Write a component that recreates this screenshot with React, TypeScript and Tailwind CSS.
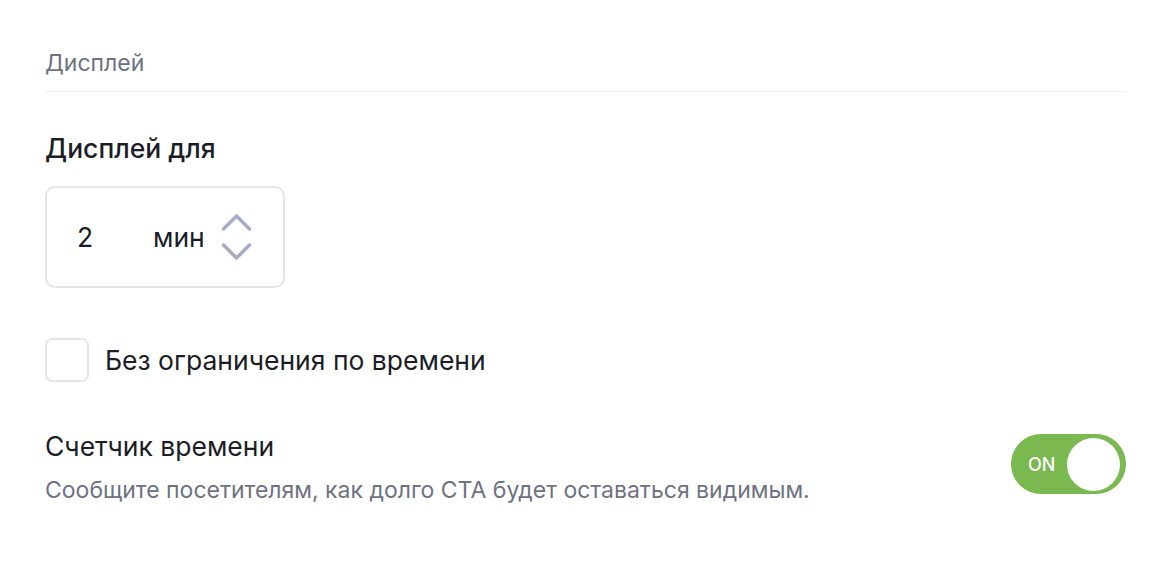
import { useState } from "react";

function Chevrons() {
  return (
    <svg width="32" height="48" viewBox="0 0 32 48" fill="none" aria-hidden>
      <path
        d="M3.5 16 L16.5 3 L29.5 16"
        stroke="#a6aac4"
        strokeWidth="3.5"
        strokeLinecap="round"
        strokeLinejoin="round"
      />
      <path
        d="M3.5 32 L16.5 45 L29.5 32"
        stroke="#a6aac4"
        strokeWidth="3.5"
        strokeLinecap="round"
        strokeLinejoin="round"
      />
    </svg>
  );
}

export default function App() {
  const [unlimited, setUnlimited] = useState(false);
  const [timerOn, setTimerOn] = useState(true);

  return (
    <div className="min-h-[564px] bg-white pl-[45px] pr-[36px] pt-[49px] font-['Inter',sans-serif] text-[#1c1d26]">
      <div className="border-b border-[#eef0f5] pb-[14px]">
        <p className="text-[23px] leading-[28px] text-[#6e7282]">Дисплей</p>
      </div>

      <h2 className="mt-[40px] text-[26.5px] leading-[32px] font-medium">Дисплей для</h2>

      <div className="mt-[22px] flex h-[102px] w-[240px] items-center rounded-[10px] border-2 border-[#e3e4ef] pl-[30px]">
        <span className="w-[76px] text-[26.5px] leading-[32px]">2</span>
        <span className="text-[26.5px] leading-[32px]">мин</span>
        <button type="button" className="ml-[15px] flex items-center">
          <Chevrons />
        </button>
      </div>

      <label className="mt-[50px] flex cursor-pointer items-center gap-[16px]">
        <button
          type="button"
          aria-pressed={unlimited}
          onClick={() => setUnlimited((v) => !v)}
          className="h-[44px] w-[44px] rounded-[7px] border-2 border-[#e3e4ef] bg-white"
        />
        <span className="text-[26.5px] leading-[32px]">Без ограничения по времени</span>
      </label>

      <div className="mt-[48px] flex items-start justify-between">
        <div>
          <h3 className="text-[26.5px] leading-[32px]">Счетчик времени</h3>
          <p className="mt-[14px] text-[23px] leading-[28px] text-[#6e7282]">
            Сообщите посетителям, как долго CTA будет оставаться видимым.
          </p>
        </div>
        <button
          type="button"
          aria-pressed={timerOn}
          onClick={() => setTimerOn((v) => !v)}
          className="mt-[4px] flex h-[60px] w-[115px] items-center rounded-full bg-[#7ab850] pl-[17px] pr-[6px]"
        >
          <span className="text-[18px] font-medium text-white">ON</span>
          <span className="ml-auto h-[53px] w-[53px] rounded-full bg-white" />
        </button>
      </div>
    </div>
  );
}
